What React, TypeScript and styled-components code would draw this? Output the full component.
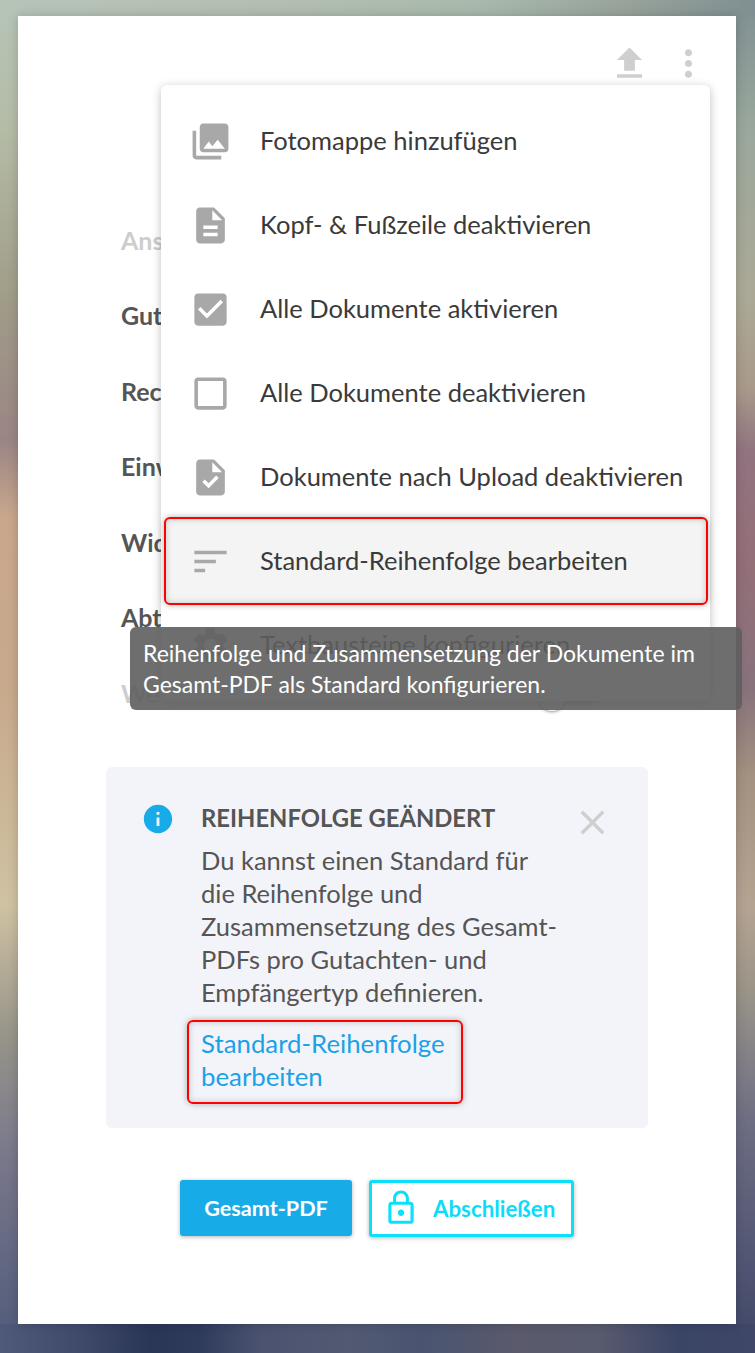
import React from "react";
import styled, { createGlobalStyle } from "styled-components";

const FONT = `Lato, "Noto Sans", "Liberation Sans", sans-serif`;

const ICONS = {
  photos:
    "M22 16V4c0-1.1-.9-2-2-2H8c-1.1 0-2 .9-2 2v12c0 1.1.9 2 2 2h12c1.1 0 2-.9 2-2zm-11-4l2.03 2.71L16 11l4 5H8l3-4zM2 6v14c0 1.1.9 2 2 2h14v-2H4V6H2z",
  document:
    "M14 2H6c-1.1 0-1.99.9-1.99 2L4 20c0 1.1.89 2 1.99 2H18c1.1 0 2-.9 2-2V8l-6-6zm2 16H8v-2h8v2zm0-4H8v-2h8v2zm-3-5V3.5L18.5 9H13z",
  checked:
    "M19 3H5c-1.11 0-2 .9-2 2v14c0 1.1.89 2 2 2h14c1.11 0 2-.9 2-2V5c0-1.1-.89-2-2-2zm-9 14l-5-5 1.41-1.41L10 14.17l7.59-7.59L19 8l-9 9z",
  unchecked:
    "M19 5v14H5V5h14m0-2H5c-1.1 0-2 .9-2 2v14c0 1.1.9 2 2 2h14c1.1 0 2-.9 2-2V5c0-1.1-.9-2-2-2z",
  task: "M14 2H6c-1.1 0-1.99.9-1.99 2L4 20c0 1.1.89 2 1.99 2H18c1.1 0 2-.9 2-2V8l-6-6zm-3.06 16L7.4 14.46l1.41-1.41 2.12 2.12 4.24-4.24 1.41 1.41L10.94 18zM13 9V3.5L18.5 9H13z",
  sort: "M3 18h6v-2H3v2zM3 6v2h18V6H3zm0 7h12v-2H3v2z",
  settings:
    "M19.14 12.94c.04-.3.06-.61.06-.94 0-.32-.02-.64-.07-.94l2.03-1.58c.18-.14.23-.41.12-.61l-1.92-3.32c-.12-.22-.37-.29-.59-.22l-2.39.96c-.5-.38-1.03-.7-1.62-.94l-.36-2.54c-.04-.24-.24-.41-.48-.41h-3.84c-.24 0-.43.17-.47.41l-.36 2.54c-.59.24-1.13.57-1.62.94l-2.39-.96c-.22-.08-.47 0-.59.22L2.74 8.87c-.12.21-.08.47.12.61l2.03 1.58c-.05.3-.09.63-.09.94s.02.64.07.94l-2.03 1.58c-.18.14-.23.41-.12.61l1.92 3.32c.12.22.37.29.59.22l2.39-.96c.5.38 1.03.7 1.62.94l.36 2.54c.05.24.24.41.48.41h3.84c.24 0 .44-.17.47-.41l.36-2.54c.59-.24 1.13-.56 1.62-.94l2.39.96c.22.08.47 0 .59-.22l1.92-3.32c.12-.22.07-.47-.12-.61l-2.01-1.58zM12 15.6c-1.98 0-3.6-1.62-3.6-3.6s1.62-3.6 3.6-3.6 3.6 1.62 3.6 3.6-1.62 3.6-3.6 3.6z",
  upload: "M9 16h6v-6h4l-7-7-7 7h4zm-4 2h14v2H5z",
  more: "M12 8c1.1 0 2-.9 2-2s-.9-2-2-2-2 .9-2 2 .9 2 2 2zm0 2c-1.1 0-2 .9-2 2s.9 2 2 2 2-.9 2-2-.9-2-2-2zm0 6c-1.1 0-2 .9-2 2s.9 2 2 2 2-.9 2-2-.9-2-2-2z",
  info: "M12 2C6.48 2 2 6.48 2 12s4.48 10 10 10 10-4.48 10-10S17.52 2 12 2zm1 15h-2v-6h2v6zm0-8h-2V7h2v2z",
  close:
    "M19 6.41L17.59 5 12 10.59 6.41 5 5 6.41 10.59 12 5 17.59 6.41 19 12 13.41 17.59 19 19 17.59 13.41 12z",
  lock: "M12 17c1.1 0 2-.9 2-2s-.9-2-2-2-2 .9-2 2 .9 2 2 2zm6-9h-1V6c0-2.76-2.24-5-5-5S7 3.24 7 6v2H6c-1.1 0-2 .9-2 2v10c0 1.1.9 2 2 2h12c1.1 0 2-.9 2-2V10c0-1.1-.9-2-2-2zM8.9 6c0-1.71 1.39-3.1 3.1-3.1s3.1 1.39 3.1 3.1v2H8.9V6zM18 20H6V10h12v10z",
};

type IconName = keyof typeof ICONS;

const MENU: { icon: IconName; label: string; active?: boolean }[] = [
  { icon: "photos", label: "Fotomappe hinzufügen" },
  { icon: "document", label: "Kopf- & Fußzeile deaktivieren" },
  { icon: "checked", label: "Alle Dokumente aktivieren" },
  { icon: "unchecked", label: "Alle Dokumente deaktivieren" },
  { icon: "task", label: "Dokumente nach Upload deaktivieren" },
  { icon: "sort", label: "Standard-Reihenfolge bearbeiten", active: true },
  { icon: "settings", label: "Textbausteine konfigurieren" },
];

const ROWS = ["Gut", "Rec", "Einw", "Wid", "Abt"];

const Icon = ({ name, size, color }: { name: IconName; size: number; color: string }) => (
  <Svg viewBox="0 0 24 24" $size={size} $color={color}>
    <path d={ICONS[name]} />
  </Svg>
);

const App = () => {
  return (
    <Page>
      <GlobalStyle />
      <Card>
        <TopBar>
          <Icon name="upload" size={43} color="#cfcfcf" />
          <Icon name="more" size={43} color="#cfcfcf" />
        </TopBar>

        <DocList>
          <DocRow $faded>Ans</DocRow>
          {ROWS.map((row) => (
            <DocRow key={row}>{row}</DocRow>
          ))}
          <DocRow $faded>
            We
            <Toggle>
              <ToggleKnob />
            </Toggle>
          </DocRow>
        </DocList>

        <Notice>
          <Icon name="info" size={34} color="#17ace8" />
          <NoticeBody>
            <NoticeTitle>REIHENFOLGE GEÄNDERT</NoticeTitle>
            <NoticeText>
              Du kannst einen Standard für
              <br />
              die Reihenfolge und
              <br />
              Zusammensetzung des Gesamt-
              <br />
              PDFs pro Gutachten- und
              <br />
              Empfängertyp definieren.
            </NoticeText>
            <NoticeLink>
              Standard-Reihenfolge
              <br />
              bearbeiten
            </NoticeLink>
          </NoticeBody>
          <CloseSlot>
            <Icon name="close" size={41} color="#cfcfcf" />
          </CloseSlot>
        </Notice>

        <Actions>
          <PrimaryButton>Gesamt-PDF</PrimaryButton>
          <LockButton>
            <Icon name="lock" size={38} color="#0be0fb" />
            Abschließen
          </LockButton>
        </Actions>

        <Menu>
          {MENU.map((item) => (
            <MenuItem key={item.label} $active={item.active}>
              <MenuIcon>
                <Icon name={item.icon} size={43} color="#a8a8a8" />
              </MenuIcon>
              <MenuLabel>{item.label}</MenuLabel>
            </MenuItem>
          ))}
        </Menu>

        <Tooltip>
          Reihenfolge und Zusammensetzung der Dokumente im
          <br />
          Gesamt-PDF als Standard konfigurieren.
        </Tooltip>
      </Card>
    </Page>
  );
};

export default App;

const GlobalStyle = createGlobalStyle`
  html, body {
    margin: 0;
    padding: 0;
  }

  body {
    font-family: ${FONT};
  }
`;

const Svg = styled.svg<{ $size: number; $color: string }>`
  display: block;
  flex: none;
  width: ${(p) => p.$size}px;
  height: ${(p) => p.$size}px;
  fill: ${(p) => p.$color};
`;

const Page = styled.div`
  box-sizing: border-box;
  width: 755px;
  height: 1353px;
  padding: 16px 19px 29px 18px;
  overflow: hidden;
  background:
    linear-gradient(90deg, #4f5a7a 0, #3f4a6b 80px, #2a3656 150px, #2f3b5b 200px, #4a5270 260px, #525a72 350px, #4a5470 420px, #5a5a6c 520px, #585a6e 600px, #3a4565 680px, #3f4668 100%) 0 100% / 100% 29px no-repeat,
    linear-gradient(90deg, #b6c4b8 0, #b4bfb2 240px, #a8b9ac 480px, #95a099 640px, #7f8f92 100%) 0 0 / 100% 16px no-repeat,
    linear-gradient(180deg, #b6c4b8 0, #b4bca6 130px, #a09c88 300px, #9a8585 440px, #c9a78c 518px, #c8a98c 690px, #cfc2a2 906px, #97948a 1035px, #77768a 1165px, #4f5a7a 100%) 0 0 / 18px 100% no-repeat,
    linear-gradient(180deg, #7f8f92 0, #9aa89c 130px, #aca896 300px, #a89a8a 388px, #917480 450px, #946f78 560px, #87727c 690px, #a4917f 776px, #b5a392 906px, #9a9488 992px, #6e6e84 1120px, #3f4668 100%) 100% 0 / 19px 100% no-repeat;
`;

const Card = styled.main`
  position: relative;
  display: flex;
  flex-direction: column;
  height: 100%;
  background: #fff;
  box-shadow: 0 0 10px rgba(0, 0, 0, 0.18);
`;

const TopBar = styled.div`
  display: flex;
  justify-content: flex-end;
  align-items: center;
  gap: 16px;
  height: 43px;
  padding: 26px 26px 0 0;
`;

const DocList = styled.div`
  display: grid;
  grid-auto-rows: 75.5px;
  width: 475px;
  margin: 117px 0 1px 103px;
`;

const DocRow = styled.div<{ $faded?: boolean }>`
  display: flex;
  justify-content: space-between;
  align-items: center;
  font-size: 25px;
  font-weight: 700;
  color: ${(p) => (p.$faded ? "#cdcdcd" : "#555")};
`;

const Toggle = styled.span`
  position: relative;
  display: block;
  width: 58px;
  height: 16px;
  margin-top: 8px;
  border-radius: 8px;
  background: #d6d6d6;
`;

const ToggleKnob = styled.span`
  position: absolute;
  top: -6px;
  left: 0;
  width: 28px;
  height: 28px;
  border-radius: 50%;
  background: #fff;
  box-shadow: 0 1px 3px rgba(0, 0, 0, 0.4);
`;

const Notice = styled.section`
  display: flex;
  align-items: flex-start;
  width: 542px;
  height: 361px;
  box-sizing: border-box;
  margin: 35px 0 0 88px;
  padding: 35px 0 0 35px;
  border-radius: 6px;
  background: #f3f4f9;
`;

const NoticeBody = styled.div`
  display: flex;
  flex-direction: column;
  align-items: flex-start;
  width: 371px;
  margin-left: 26px;
`;

const NoticeTitle = styled.h2`
  margin: 0 0 9px;
  font-size: 23.8px;
  line-height: 33px;
  font-weight: 700;
  color: #555;
`;

const NoticeText = styled.p`
  margin: 0;
  font-size: 25.5px;
  line-height: 33px;
  white-space: nowrap;
  color: #555;
`;

const NoticeLink = styled.a`
  box-sizing: border-box;
  width: 276px;
  height: 84px;
  margin: 11px 0 0 -14px;
  padding: 5px 0 0 12px;
  border: 2px solid #f00;
  border-radius: 6px;
  font-size: 25.8px;
  line-height: 33px;
  white-space: nowrap;
  color: #1ba1e6;
  box-shadow: 0 0 6px rgba(0, 0, 0, 0.3), inset 0 0 6px rgba(0, 0, 0, 0.2);
`;

const CloseSlot = styled.div`
  margin: 0;
`;

const Actions = styled.div`
  display: flex;
  justify-content: center;
  gap: 17px;
  margin-top: 52px;
`;

const PrimaryButton = styled.button`
  width: 172px;
  height: 56px;
  border: 0;
  border-radius: 3px;
  background: #17ace8;
  font-family: ${FONT};
  font-size: 21.6px;
  font-weight: 700;
  color: #fff;
  box-shadow: 0 1px 4px rgba(0, 0, 0, 0.3);
`;

const LockButton = styled.button`
  display: flex;
  align-items: center;
  gap: 13px;
  box-sizing: border-box;
  width: 205px;
  height: 57px;
  padding: 0 0 0 10px;
  border: 3px solid #0be0fb;
  border-radius: 3px;
  background: #fff;
  font-family: ${FONT};
  font-size: 22.3px;
  font-weight: 700;
  white-space: nowrap;
  color: #0bdcfb;
  box-shadow: 0 1px 4px rgba(0, 0, 0, 0.3);
`;

const Menu = styled.nav`
  position: absolute;
  top: 69px;
  left: 143px;
  box-sizing: border-box;
  width: 549px;
  height: 616px;
  padding: 14px 0;
  border-radius: 6px;
  background: #fff;
  box-shadow: 0 2px 10px rgba(0, 0, 0, 0.25);
`;

const MenuIcon = styled.span`
  margin-right: 28px;
`;

const MenuLabel = styled.span`
  margin-bottom: 2px;
`;

const MenuItem = styled.div<{ $active?: boolean }>`
  display: flex;
  align-items: center;
  box-sizing: border-box;
  height: ${(p) => (p.$active ? "88px" : "84px")};
  margin: ${(p) => (p.$active ? "-2px 2px -2px 3px" : "0")};
  padding-left: ${(p) => (p.$active ? "23px" : "28px")};
  border: ${(p) => (p.$active ? "2px solid #f00" : "0")};
  border-radius: 6px;
  background: ${(p) => (p.$active ? "#f4f4f4" : "transparent")};
  box-shadow: ${(p) =>
    p.$active ? "0 0 6px rgba(0, 0, 0, 0.3), inset 0 0 6px rgba(0, 0, 0, 0.2)" : "none"};
  font-size: 25.5px;
  white-space: nowrap;
  color: #3a3a3a;
`;

const Tooltip = styled.div`
  position: absolute;
  top: 611px;
  left: 112px;
  box-sizing: border-box;
  width: 612px;
  height: 83px;
  padding: 11px 0 0 13px;
  border-radius: 6px;
  background: rgba(94, 94, 94, 0.9);
  font-size: 23px;
  line-height: 31px;
  white-space: nowrap;
  color: #fff;
`;
